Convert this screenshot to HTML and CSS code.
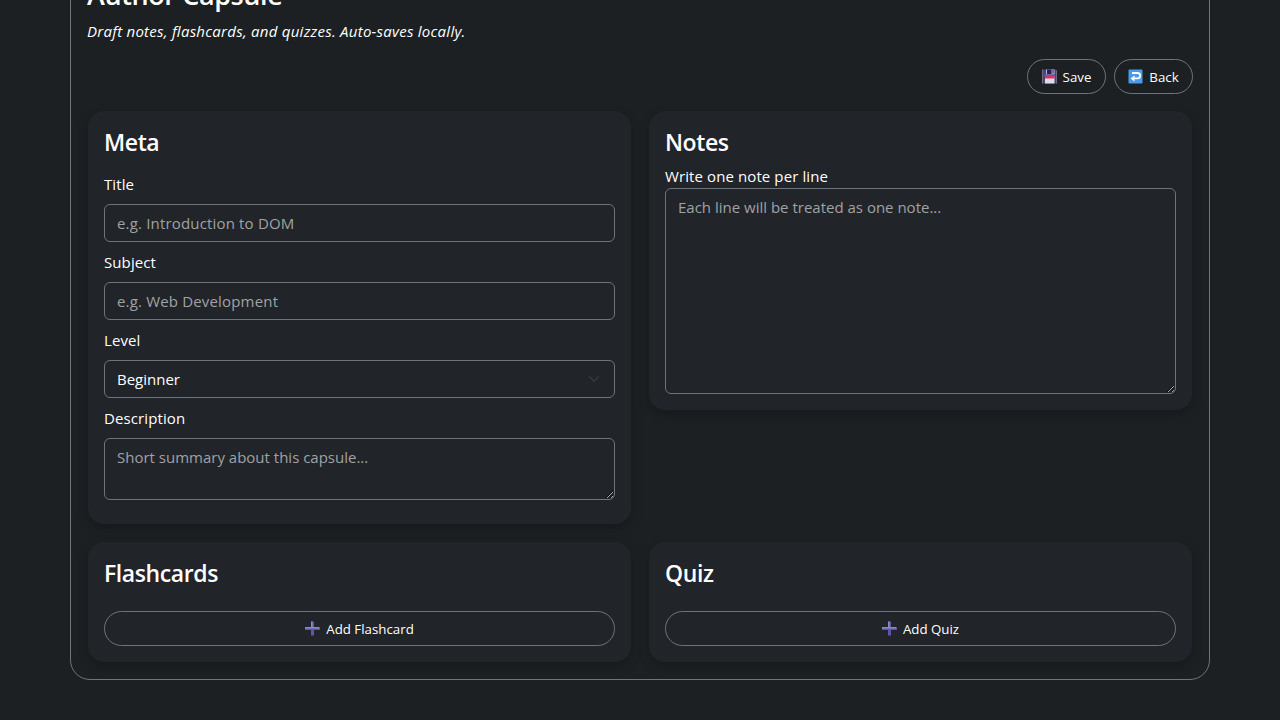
FILE: index.html
```html
<!DOCTYPE html>
<html lang="en">
<head>
    <meta charset="UTF-8">
    <meta name="viewport" content="width=device-width, initial-scale=1.0">
    <title>Author Capsule</title>
    <link rel="stylesheet" href="styles.css">
</head>
<body>
    <main class="author">
        <h1 class="page-title">Author Capsule</h1>
        <p class="subtitle">Draft notes, flashcards, and quizzes. Auto-saves locally.</p>

        <div class="actions">
            <button type="button" class="btn" id="saveBtn">
                <svg class="icon" viewBox="0 0 15 15">
                    <path d="M0 .5h14l1 1v13H0z" fill="#4b4278"/>
                    <path d="M0 .5h1v14H0zM14 1.500h1v13h-1z" fill="#6f6a86"/>
                    <path d="M4 .5h8.500v5H4z" fill="#b9b7cf"/>
                    <path d="M5 .5h4.500v4.500H5z" fill="#241f4f"/>
                    <path d="M10.500 1h1v3.500h-1z" fill="#29235c"/>
                    <path d="M2 5.500h11v1.500H2z" fill="#6157b8"/>
                    <path d="M3 7h9.500v7.500H3z" fill="#dedbe8"/>
                    <path d="M3 7h9.500v2.500H3z" fill="#d83468"/>
                </svg>
                <span>Save</span>
            </button>
            <button type="button" class="btn" id="backBtn">
                <svg class="icon" viewBox="0 0 15 15">
                    <rect x=".5" y=".5" width="14" height="14" rx="1" fill="#4a9bec"/>
                    <path d="M4 4h5.500a2.700 2.700 0 0 1 0 5.400H5.500" fill="none" stroke="#fff" stroke-width="1.800"/>
                    <path d="M2.500 9.400l4-3v6z" fill="#fff"/>
                </svg>
                <span>Back</span>
            </button>
        </div>

        <div class="grid">
            <section class="card">
                <h2>Meta</h2>
                <div class="field">
                    <label for="title">Title</label>
                    <input type="text" id="title" class="control" placeholder="e.g. Introduction to DOM">
                </div>
                <div class="field">
                    <label for="subject">Subject</label>
                    <input type="text" id="subject" class="control" placeholder="e.g. Web Development">
                </div>
                <div class="field">
                    <label for="level">Level</label>
                    <select id="level" class="control select">
                        <option>Beginner</option>
                        <option>Intermediate</option>
                        <option>Advanced</option>
                    </select>
                </div>
                <div class="field">
                    <label for="description">Description</label>
                    <textarea id="description" class="control" rows="2" placeholder="Short summary about this capsule..."></textarea>
                </div>
            </section>

            <section class="card notes">
                <h2>Notes</h2>
                <label for="notes">Write one note per line</label>
                <textarea id="notes" class="control" rows="8" placeholder="Each line will be treated as one note..."></textarea>
            </section>

            <section class="card list">
                <h2>Flashcards</h2>
                <button type="button" class="btn btn-wide">
                    <svg class="icon" viewBox="0 0 15 15">
                        <path d="M6 .5h3V6h6v3H9v5.500H6V9H0V6h6z" fill="#6a50a6"/>
                        <path d="M6 .5h1.500V6H14v1.500H0V6h6z" fill="#7e93c0"/>
                    </svg>
                    <span>Add Flashcard</span>
                </button>
            </section>

            <section class="card list">
                <h2>Quiz</h2>
                <button type="button" class="btn btn-wide">
                    <svg class="icon" viewBox="0 0 15 15">
                        <path d="M6 .5h3V6h6v3H9v5.500H6V9H0V6h6z" fill="#6a50a6"/>
                        <path d="M6 .5h1.500V6H14v1.500H0V6h6z" fill="#7e93c0"/>
                    </svg>
                    <span>Add Quiz</span>
                </button>
            </section>
        </div>
    </main>
</body>
</html>
```

FILE: styles.css
```css
* {
    box-sizing: border-box;
}
body {
    margin: 0;
    height: 720px;
    overflow: hidden;
    background-color: #1c2022;
    color: #fff;
    font-family: "Open Sans", "Noto Sans", sans-serif;
    font-size: 15px;
    line-height: 24px;
}
h1, h2, p {
    margin: 0;
}
.author {
    width: 1140px;
    height: 720px;
    margin: -40px auto 0;
    padding: 16px;
    border: 1px solid #6c757d;
    border-radius: 20px;
}
.page-title {
    font-size: 27px;
    font-weight: 600;
    letter-spacing: -0.4px;
    line-height: 34px;
    padding-top: 1px;
    margin-bottom: 7px;
}
.subtitle {
    font-style: italic;
    letter-spacing: 0.26px;
    margin-bottom: 16px;
}
.actions {
    display: flex;
    justify-content: flex-end;
    gap: 8px;
    margin-bottom: 17px;
}
.btn {
    display: flex;
    align-items: center;
    justify-content: center;
    gap: 6px;
    width: 79px;
    height: 35px;
    padding: 0;
    background: none;
    border: 1px solid #6c757d;
    border-radius: 50px;
    color: #fff;
    font-family: inherit;
    font-size: 13.3px;
    cursor: pointer;
}
.btn:hover {
    background-color: #2b3035;
}
.btn-wide {
    width: 100%;
}
.icon {
    width: 15px;
    height: 15px;
}
.grid {
    display: grid;
    grid-template-columns: 1fr 1fr;
    gap: 18px;
    align-items: start;
    padding: 0 1px;
}
.card {
    padding: 16px;
    background-color: #212429;
    border-radius: 16px;
    box-shadow: 0 4px 12px rgba(0, 0, 0, 0.2);
}
.card h2 {
    font-size: 23px;
    font-weight: 600;
    letter-spacing: -0.4px;
    line-height: 29px;
    padding-top: 1px;
    margin-bottom: 15px;
}
.card.notes h2 {
    margin-bottom: 7px;
}
.card.list h2 {
    margin-bottom: 23px;
}
.field {
    margin-bottom: 8px;
}
label {
    display: block;
    letter-spacing: 0.1px;
}
.field label {
    margin-bottom: 8px;
}
.control {
    display: block;
    width: 100%;
    height: 38px;
    padding: 6px 12px;
    background-color: transparent;
    border: 1px solid #6c757d;
    border-radius: 6px;
    color: #fff;
    font: inherit;
    outline: none;
}
input.control {
    letter-spacing: 0.17px;
}
.control::placeholder {
    color: #a0a2a4;
    opacity: 1;
}
textarea.control {
    height: auto;
    resize: vertical;
}
.select {
    appearance: none;
    background-image: url("data:image/svg+xml,%3csvg xmlns='http://www.w3.org/2000/svg' viewBox='0 0 16 16'%3e%3cpath fill='none' stroke='%23343a40' stroke-linecap='round' stroke-linejoin='round' stroke-width='2' d='m2 5 6 6 6-6'/%3e%3c/svg%3e");
    background-repeat: no-repeat;
    background-position: right 14px center;
    background-size: 12px 12px;
}
```
